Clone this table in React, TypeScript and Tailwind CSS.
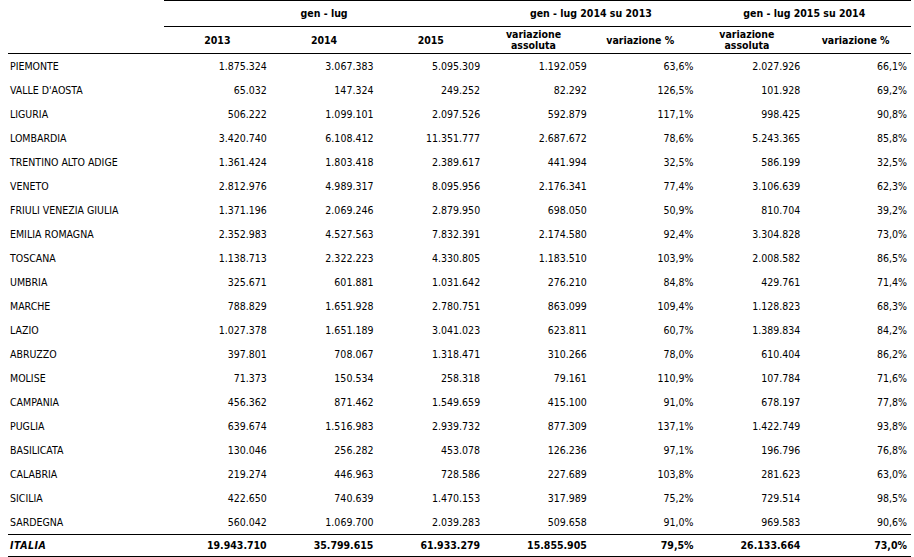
import React from "react";

const rows: string[][] = [
  ["PIEMONTE", "1.875.324", "3.067.383", "5.095.309", "1.192.059", "63,6%", "2.027.926", "66,1%"],
  ["VALLE D'AOSTA", "65.032", "147.324", "249.252", "82.292", "126,5%", "101.928", "69,2%"],
  ["LIGURIA", "506.222", "1.099.101", "2.097.526", "592.879", "117,1%", "998.425", "90,8%"],
  ["LOMBARDIA", "3.420.740", "6.108.412", "11.351.777", "2.687.672", "78,6%", "5.243.365", "85,8%"],
  ["TRENTINO ALTO ADIGE", "1.361.424", "1.803.418", "2.389.617", "441.994", "32,5%", "586.199", "32,5%"],
  ["VENETO", "2.812.976", "4.989.317", "8.095.956", "2.176.341", "77,4%", "3.106.639", "62,3%"],
  ["FRIULI VENEZIA GIULIA", "1.371.196", "2.069.246", "2.879.950", "698.050", "50,9%", "810.704", "39,2%"],
  ["EMILIA ROMAGNA", "2.352.983", "4.527.563", "7.832.391", "2.174.580", "92,4%", "3.304.828", "73,0%"],
  ["TOSCANA", "1.138.713", "2.322.223", "4.330.805", "1.183.510", "103,9%", "2.008.582", "86,5%"],
  ["UMBRIA", "325.671", "601.881", "1.031.642", "276.210", "84,8%", "429.761", "71,4%"],
  ["MARCHE", "788.829", "1.651.928", "2.780.751", "863.099", "109,4%", "1.128.823", "68,3%"],
  ["LAZIO", "1.027.378", "1.651.189", "3.041.023", "623.811", "60,7%", "1.389.834", "84,2%"],
  ["ABRUZZO", "397.801", "708.067", "1.318.471", "310.266", "78,0%", "610.404", "86,2%"],
  ["MOLISE", "71.373", "150.534", "258.318", "79.161", "110,9%", "107.784", "71,6%"],
  ["CAMPANIA", "456.362", "871.462", "1.549.659", "415.100", "91,0%", "678.197", "77,8%"],
  ["PUGLIA", "639.674", "1.516.983", "2.939.732", "877.309", "137,1%", "1.422.749", "93,8%"],
  ["BASILICATA", "130.046", "256.282", "453.078", "126.236", "97,1%", "196.796", "76,8%"],
  ["CALABRIA", "219.274", "446.963", "728.586", "227.689", "103,8%", "281.623", "63,0%"],
  ["SICILIA", "422.650", "740.639", "1.470.153", "317.989", "75,2%", "729.514", "98,5%"],
  ["SARDEGNA", "560.042", "1.069.700", "2.039.283", "509.658", "91,0%", "969.583", "90,6%"],
];

const totale = ["ITALIA", "19.943.710", "35.799.615", "61.933.279", "15.855.905", "79,5%", "26.133.664", "73,0%"];

const gridCols = "grid grid-cols-[156px_repeat(7,minmax(0,1fr))]";

export default function App() {
  return (
    <div
      className="w-[914px] h-[557px] bg-white pl-2 pr-[3px] text-black text-[10.5px] leading-none overflow-hidden"
      style={{ fontFamily: '"DejaVu Sans Condensed", "DejaVu Sans", sans-serif' }}
    >
      {/* intestazione gruppi */}
      <div className={gridCols}>
        <div />
        <div className="col-span-3 h-[27px] border-y border-black flex items-center justify-center font-bold">
          gen - lug
        </div>
        <div className="col-span-2 h-[27px] border-y border-black flex items-center justify-center font-bold">
          gen - lug 2014 su 2013
        </div>
        <div className="col-span-2 h-[27px] border-y border-black flex items-center justify-center font-bold">
          gen - lug 2015 su 2014
        </div>
      </div>

      {/* intestazione colonne */}
      <div className={`${gridCols} h-[27px] border-b border-black font-bold`}>
        <div />
        <div className="flex items-center justify-center">2013</div>
        <div className="flex items-center justify-center">2014</div>
        <div className="flex items-center justify-center">2015</div>
        <div className="flex items-center justify-center text-center leading-[11px] pr-2">
          variazione
          <br />
          assoluta
        </div>
        <div className="flex items-center justify-center pr-2">variazione %</div>
        <div className="flex items-center justify-center text-center leading-[11px] pr-2">
          variazione
          <br />
          assoluta
        </div>
        <div className="flex items-center justify-center pr-1">variazione %</div>
      </div>

      {/* righe regioni */}
      {rows.map((r) => (
        <div key={r[0]} className={`${gridCols} h-[24px] items-center`}>
          <div className="pl-[2px] whitespace-nowrap">{r[0]}</div>
          {r.slice(1).map((v, i) => (
            <div key={i} className="text-right pr-1">
              {v}
            </div>
          ))}
        </div>
      ))}

      {/* totale */}
      <div className={`${gridCols} h-[23px] items-center border-y border-black font-bold`}>
        <div className="pl-[2px] italic font-black tracking-[0.5px]">{totale[0]}</div>
        {totale.slice(1).map((v, i) => (
          <div key={i} className="text-right pr-1">
            {v}
          </div>
        ))}
      </div>
    </div>
  );
}
